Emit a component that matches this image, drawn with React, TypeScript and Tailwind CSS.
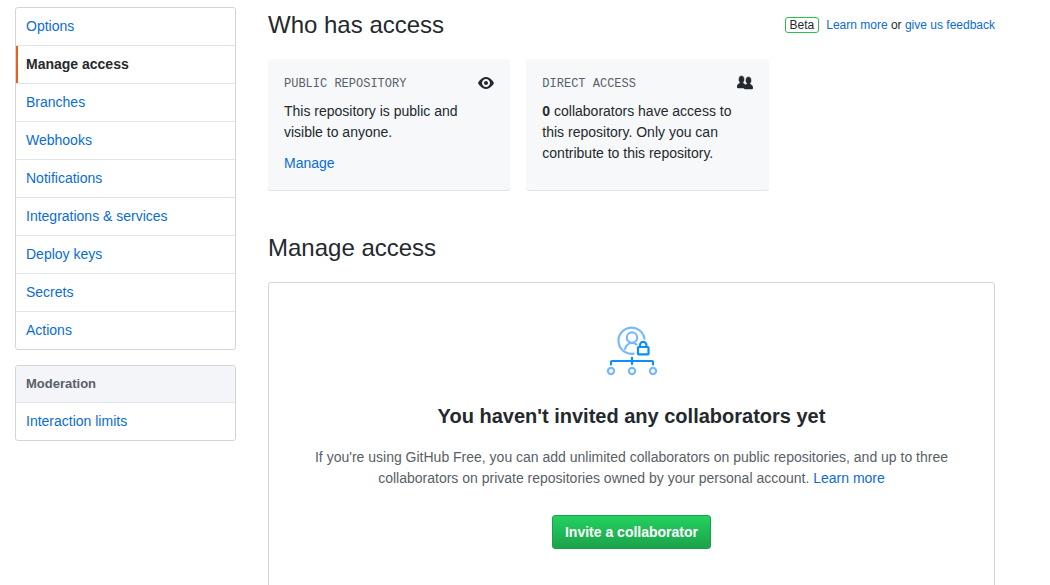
import React from "react";

const settingsLinks = [
  "Options",
  "Manage access",
  "Branches",
  "Webhooks",
  "Notifications",
  "Integrations & services",
  "Deploy keys",
  "Secrets",
  "Actions",
];

function EyeIcon() {
  return (
    <svg className="h-4 w-4 shrink-0" viewBox="0 0 16 16" fill="currentColor" aria-hidden="true">
      <path
        fillRule="evenodd"
        d="M8.06 2C3 2 0 8 0 8s3 6 8.06 6C13 14 16 8 16 8s-3-6-7.94-6zM8 12c-2.2 0-4-1.78-4-4 0-2.2 1.8-4 4-4 2.22 0 4 1.8 4 4 0 2.22-1.78 4-4 4zm2-4c0 1.11-.89 2-2 2-1.11 0-2-.89-2-2 0-1.11.89-2 2-2 1.11 0 2 .89 2 2z"
      />
    </svg>
  );
}

function PeopleIcon() {
  return (
    <svg
      className="h-4 w-4 shrink-0"
      viewBox="0 0 16 16"
      fill="currentColor"
      stroke="currentColor"
      strokeWidth="0.5"
      aria-hidden="true"
    >
      <path
        fillRule="evenodd"
        d="M16 12.999c0 .439-.45 1-1 1H7.995c-.539 0-.994-.447-.995-.999H1c-.54 0-1-.561-1-1 0-2.634 3-4 3-4s.229-.409 0-1c-.841-.621-1.058-.59-1-3 .058-2.419 1.367-3 2.5-3s2.442.58 2.5 3c.058 2.41-.159 2.379-1 3-.229.59 0 1 0 1s1.549.711 2.42 2.088C9.196 9.369 10 8.999 10 8.999s.229-.409 0-1c-.841-.62-1.058-.59-1-3 .058-2.419 1.367-3 2.5-3s2.437.581 2.495 3c.059 2.41-.158 2.38-1 3-.229.59 0 1 0 1s3.005 1.366 3.005 4z"
      />
    </svg>
  );
}

function AccessIllustration() {
  return (
    <svg className="h-[52px] w-[52px]" viewBox="0 0 52 52" fill="none" aria-hidden="true">
      <g stroke="#79b8ff" strokeWidth="2.2" strokeLinecap="round">
        <path d="M38.500 13.600A13.100 13.100 0 1 0 27.700 28.700" />
        <circle cx="26" cy="12.600" r="5.200" />
        <path d="M19 24C20.200 20.200 22.800 18 26 18c1.800 0 3.300.5 4.500 1.500" />
        <circle cx="5" cy="46" r="3.100" />
        <circle cx="26" cy="46" r="3.100" />
        <circle cx="47" cy="46" r="3.100" />
      </g>
      <g stroke="#0d8ffb" strokeWidth="2.2">
        <rect x="32" y="22" width="10.500" height="7.300" rx="0.600" />
        <path d="M34 21.500V20a3.200 3.200 0 0 1 6.400 0v1.500" />
        <path d="M5 39.500V37a1 1 0 0 1 1-1h40a1 1 0 0 1 1 1v2.500M26 32.800v6.200" strokeLinecap="round" />
      </g>
    </svg>
  );
}

function Sidebar() {
  return (
    <aside className="flex w-[221px] shrink-0 flex-col gap-[15px]">
      <nav aria-label="Repository settings" className="overflow-hidden rounded-[3px] border border-[#d1d5da]">
        {settingsLinks.map((label) =>
          label === "Manage access" ? (
            <div key={label} className="border-b border-[#e1e4e8]">
              <a
                href="#manage-access"
                aria-current="page"
                className="block border-l-2 border-[#e8601c] py-2 pr-[10px] pl-2 font-bold text-[#24292e]"
              >
                {label}
              </a>
            </div>
          ) : (
            <a
              key={label}
              href="#settings"
              className="block border-b border-[#e1e4e8] px-[10px] py-2 text-[#0a6cd6] last:border-b-0"
            >
              {label}
            </a>
          )
        )}
      </nav>
      <nav aria-labelledby="moderation" className="overflow-hidden rounded-[3px] border border-[#d1d5da]">
        <h3
          id="moderation"
          className="border-b border-[#e1e4e8] bg-[#f3f5f8] px-[10px] py-2 text-[13px] leading-5 font-bold text-[#586069]"
        >
          Moderation
        </h3>
        <a href="#interaction-limits" className="block px-[10px] py-2 text-[#0a6cd6]">
          Interaction limits
        </a>
      </nav>
    </aside>
  );
}

function AccessCard({
  title,
  icon,
  children,
}: {
  title: string;
  icon: React.ReactNode;
  children: React.ReactNode;
}) {
  return (
    <section className="w-1/3 rounded-[3px] bg-[#f6f8fa] p-4 shadow-[0_1px_0_#e1e4e8]">
      <div className="mb-2 flex items-start justify-between">
        <h3 className="font-['Liberation_Mono',monospace] text-[12px] leading-[18px] text-[#586069] uppercase">
          {title}
        </h3>
        {icon}
      </div>
      {children}
    </section>
  );
}

export default function App() {
  return (
    <div className="flex items-start gap-8 bg-white pt-[7px] pr-[55px] pl-[15px] font-['Liberation_Sans',Arial,sans-serif] text-[14px] leading-[21px] text-[#24292e]">
      <Sidebar />
      <main className="min-w-0 flex-1">
        <header className="mb-4 flex items-center justify-between">
          <h2 className="text-[24px] leading-9">Who has access</h2>
          <p className="text-[12px] leading-[18px]">
            <span className="mr-[7px] rounded-[3px] border border-[#2cbe4e] px-1">Beta</span>
            <a href="#learn" className="text-[#0a6cd6]">Learn more</a> or{" "}
            <a href="#feedback" className="text-[#0a6cd6]">give us feedback</a>
          </p>
        </header>

        <div className="mb-10 flex gap-4">
          <AccessCard title="Public repository" icon={<EyeIcon />}>
            <p>This repository is public and visible to anyone.</p>
            <a href="#visibility" className="mt-[10px] block text-[#0a6cd6]">Manage</a>
          </AccessCard>
          <AccessCard title="Direct access" icon={<PeopleIcon />}>
            <p>
              <strong>0</strong> collaborators have access to this repository. Only you can contribute to this
              repository.
            </p>
          </AccessCard>
        </div>

        <h2 id="manage-access" className="mb-4 text-[24px] leading-9">Manage access</h2>
        <section className="flex flex-col items-center rounded-[3px] border border-[#d1d5da] px-10 pt-[42px] pb-12 text-center">
          <AccessIllustration />
          <h3 className="mt-6 text-[20px] leading-[30px] font-bold">You haven't invited any collaborators yet</h3>
          <p className="mt-4 text-[#586069]">
            If you're using GitHub Free, you can add unlimited collaborators on public repositories, and up to three
            collaborators on private repositories owned by your personal account.{" "}
            <a href="#plans" className="text-[#0a6cd6]">Learn more</a>
          </p>
          <button
            type="button"
            className="mt-[26px] rounded-[3px] border border-[#1b9e46] bg-linear-to-b from-[#23d160] to-[#1ba34a] px-3 py-[6px] leading-5 font-bold text-white"
          >
            Invite a collaborator
          </button>
        </section>
      </main>
    </div>
  );
}
